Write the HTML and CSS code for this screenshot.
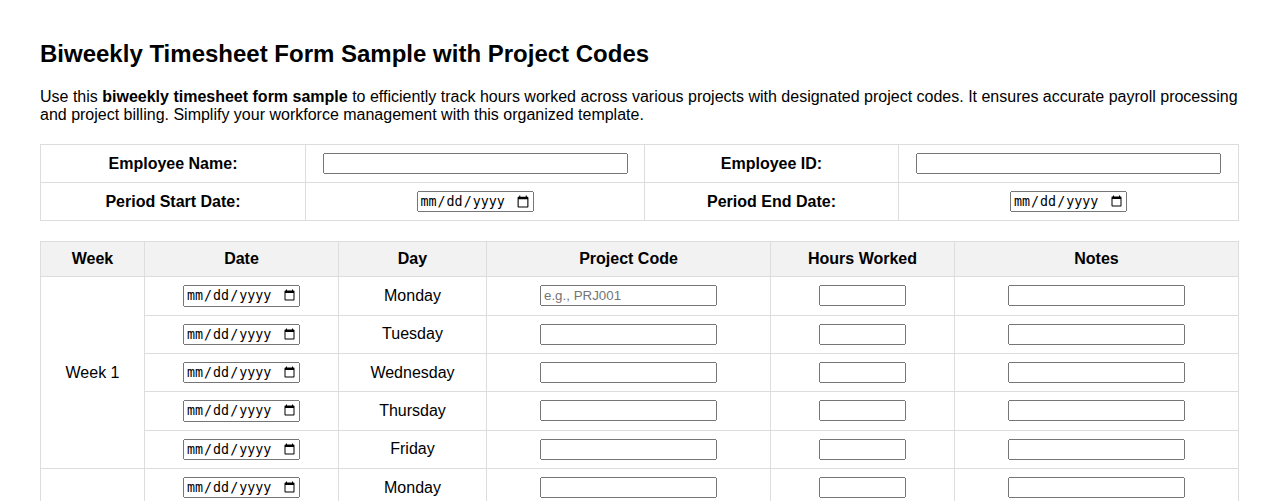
FILE: index.html
```html
<!DOCTYPE html>
<html lang="en">
<head>
<meta charset="utf-8">
<title>Biweekly Timesheet Form Sample with Project Codes</title>
<link rel="stylesheet" href="styles.css">
</head>
<body>
<h2 class="title">Biweekly Timesheet Form Sample with Project Codes</h2>
<p class="intro">Use this <strong>biweekly timesheet form sample</strong> to efficiently track hours worked across various projects with designated project codes. It ensures accurate payroll processing and project billing. Simplify your workforce management with this organized template.</p>

<table class="grid info">
  <colgroup>
    <col class="c-label1"><col class="c-field1"><col class="c-label2"><col class="c-field2">
  </colgroup>
  <tr>
    <th>Employee Name:</th>
    <td><input type="text" class="wide"></td>
    <th>Employee ID:</th>
    <td><input type="text" class="wide"></td>
  </tr>
  <tr>
    <th>Period Start Date:</th>
    <td><input type="date" class="date"></td>
    <th>Period End Date:</th>
    <td><input type="date" class="date"></td>
  </tr>
</table>

<table class="grid sheet">
  <colgroup>
    <col class="c-week"><col class="c-date"><col class="c-day"><col class="c-code"><col class="c-hours"><col class="c-notes">
  </colgroup>
  <thead>
    <tr class="head">
      <th>Week</th><th>Date</th><th>Day</th><th>Project Code</th><th>Hours Worked</th><th>Notes</th>
    </tr>
  </thead>
  <tbody>
    <tr>
      <td rowspan="5">Week 1</td>
      <td><input type="date" class="date"></td>
      <td>Monday</td>
      <td><input type="text" class="code" placeholder="e.g., PRJ001"></td>
      <td><input type="text" class="hours"></td>
      <td><input type="text" class="notes"></td>
    </tr>
    <tr>
      <td><input type="date" class="date"></td>
      <td>Tuesday</td>
      <td><input type="text" class="code"></td>
      <td><input type="text" class="hours"></td>
      <td><input type="text" class="notes"></td>
    </tr>
    <tr>
      <td><input type="date" class="date"></td>
      <td>Wednesday</td>
      <td><input type="text" class="code"></td>
      <td><input type="text" class="hours"></td>
      <td><input type="text" class="notes"></td>
    </tr>
    <tr>
      <td><input type="date" class="date"></td>
      <td>Thursday</td>
      <td><input type="text" class="code"></td>
      <td><input type="text" class="hours"></td>
      <td><input type="text" class="notes"></td>
    </tr>
    <tr>
      <td><input type="date" class="date"></td>
      <td>Friday</td>
      <td><input type="text" class="code"></td>
      <td><input type="text" class="hours"></td>
      <td><input type="text" class="notes"></td>
    </tr>
    <tr>
      <td rowspan="5">Week 2</td>
      <td><input type="date" class="date"></td>
      <td>Monday</td>
      <td><input type="text" class="code"></td>
      <td><input type="text" class="hours"></td>
      <td><input type="text" class="notes"></td>
    </tr>
    <tr>
      <td><input type="date" class="date"></td>
      <td>Tuesday</td>
      <td><input type="text" class="code"></td>
      <td><input type="text" class="hours"></td>
      <td><input type="text" class="notes"></td>
    </tr>
    <tr>
      <td><input type="date" class="date"></td>
      <td>Wednesday</td>
      <td><input type="text" class="code"></td>
      <td><input type="text" class="hours"></td>
      <td><input type="text" class="notes"></td>
    </tr>
    <tr>
      <td><input type="date" class="date"></td>
      <td>Thursday</td>
      <td><input type="text" class="code"></td>
      <td><input type="text" class="hours"></td>
      <td><input type="text" class="notes"></td>
    </tr>
    <tr>
      <td><input type="date" class="date"></td>
      <td>Friday</td>
      <td><input type="text" class="code"></td>
      <td><input type="text" class="hours"></td>
      <td><input type="text" class="notes"></td>
    </tr>
  </tbody>
</table>
</body>
</html>
```
FILE: styles.css
```css
html, body {
  background: #fff;
}
body {
  margin: 0;
  padding: 20px 40px;
  font-family: "Liberation Sans", Arial, sans-serif;
  font-size: 16px;
  color: #000;
}
.title {
  font-size: 24px;
  font-weight: bold;
  margin: 20px 0;
}
.intro {
  margin: 16px 0;
  line-height: 18px;
}
.grid {
  width: 100%;
  border-collapse: collapse;
  table-layout: fixed;
  margin: 20px 0;
}
.grid th,
.grid td {
  border: 1px solid #ddd;
  padding: 8px;
  text-align: center;
  vertical-align: middle;
}
.grid th {
  font-weight: bold;
}
.head th {
  background: #f2f2f2;
  line-height: 18px;
}
.c-label1 { width: 265px; }
.c-field1 { width: 339px; }
.c-label2 { width: 254px; }
.c-field2 { width: 340px; }
.c-week { width: 104px; }
.c-date { width: 194px; }
.c-day { width: 148px; }
.c-code { width: 284px; }
.c-hours { width: 184px; }
.c-notes { width: 284px; }

input {
  box-sizing: border-box;
  vertical-align: middle;
  margin: 0;
}
input[type="text"] {
  font-family: "Liberation Sans", Arial, sans-serif;
  font-size: 13.333px;
}
input::placeholder {
  color: #757575;
}
.wide { width: 305px; }
.date { width: 117px; }
.code { width: 177px; }
.hours { width: 87px; }
.notes { width: 177px; }
```
